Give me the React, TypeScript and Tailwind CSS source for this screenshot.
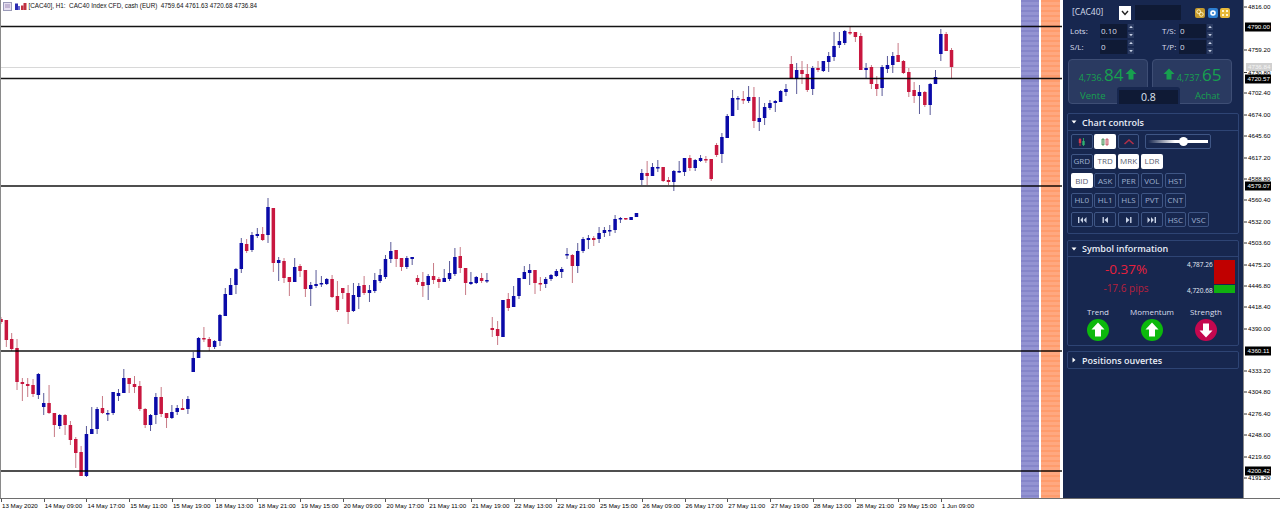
import React from "react";

type C = [number, number, number, number, number, number];
// [index, wickTop, bodyTop, bodyBottom, wickBottom, 0 red / 1 blue]
const candles: C[] = [
[0,317,319,322,324,0],[1,320,320,340,347,0],[2,333,339,349,351,0],[3,339,348,382,390,0],[4,378,382,384,401,0],[5,378,384,386,397,0],[6,379,385,394,397,0],[7,373,374,395,399,1],[8,393,403,407,415,1],[9,385,403,413,414,0],[10,413,413,425,437,0],[11,414,415,426,429,1],[12,414,415,425,435,0],[13,421,425,440,445,0],[14,437,439,453,468,0],[15,446,452,476,476,0],[16,426,434,476,477,1],[17,407,429,434,434,1],[18,407,409,429,434,1],[19,396,408,413,414,0],[20,410,413,414,421,1],[21,392,392,413,415,1],[22,389,393,396,401,1],[23,369,378,393,393,1],[24,378,378,384,393,0],[25,376,384,387,393,0],[26,381,386,409,411,0],[27,408,409,425,428,0],[28,414,415,425,431,1],[29,393,397,415,424,1],[30,387,397,414,417,0],[31,413,413,418,428,0],[32,405,412,418,419,1],[33,405,408,412,415,1],[34,399,408,410,410,0],[35,396,399,409,414,1],
[36,352,358,372,372,1],[37,337,338,358,358,1],[38,327,338,339,342,0],[39,337,339,347,351,0],[40,340,341,347,349,1],[41,314,315,341,346,1],[42,288,294,316,316,1],[43,278,285,295,295,1],[44,268,269,285,294,1],[45,238,243,269,273,1],[46,239,244,251,253,0],[47,232,235,250,252,1],[48,228,234,236,238,1],[49,227,234,240,241,0],[50,198,207,235,243,1],[51,208,208,263,272,0],[52,257,260,263,281,1],[53,258,261,278,283,0],[54,277,277,282,296,0],[55,258,267,282,282,1],[56,264,266,271,277,0],[57,270,270,289,297,0],[58,282,285,289,306,1],[59,270,284,286,288,1],[60,276,283,284,287,1],[61,278,279,284,285,1],[62,275,279,297,298,0],[63,281,296,310,312,0],[64,288,288,293,299,0],[65,285,293,312,324,0],[66,283,295,311,312,1],[67,283,286,297,309,1],[68,276,285,293,295,0],[69,285,290,293,302,1],[70,273,280,291,293,1],[71,269,275,281,283,1],[72,255,259,277,279,1],[73,242,251,259,263,1],[74,250,250,259,267,0],[75,258,258,267,271,0],[76,256,258,267,269,1],[77,257,257,259,265,1],
[78,275,278,282,285,0],[79,272,282,286,297,0],[80,274,276,285,300,1],[81,263,276,280,284,0],[82,277,279,282,288,0],[83,269,278,282,282,1],[84,261,273,279,281,1],[85,248,257,274,276,1],[86,247,256,268,273,0],[87,268,268,283,295,0],[88,272,282,284,285,1],[89,276,277,283,284,1],[90,273,278,281,283,0],[91,273,280,281,283,1],[92,317,328,330,337,0],[93,321,329,336,345,0],[94,300,300,337,337,1],[95,293,299,308,311,0],[96,286,296,307,307,1],[97,278,278,296,299,1],[98,266,272,279,279,1],[99,264,270,273,285,1],[100,270,270,283,294,0],[101,277,283,284,291,0],[102,277,279,284,288,1],[103,274,275,279,281,1],[104,269,271,276,277,1],[105,267,269,272,278,1],[106,248,254,255,259,1],[107,254,255,266,283,0],[108,243,251,266,273,1],[109,237,239,251,253,1],[110,235,238,240,249,1],[111,236,238,240,246,0],[112,227,233,239,243,1],[113,227,230,233,237,1],[114,225,230,231,236,1],[115,215,219,230,233,1],[116,217,218,219,223,1],[117,218,218,219,220,0],[118,217,217,220,220,1],[119,213,213,217,217,1],
[120,169,173,180,185,1],[121,161,173,176,185,0],[122,163,167,176,176,1],[123,160,167,168,172,1],[124,167,167,181,182,0],[125,177,180,182,185,0],[126,170,171,182,191,1],[127,161,171,172,173,1],[128,158,158,172,176,1],[129,155,158,168,171,0],[130,159,160,168,171,1],[131,155,158,161,162,1],[132,156,159,160,163,0],[133,159,159,179,181,0],[134,143,145,155,157,0],[135,133,137,154,163,1],[136,114,116,138,138,1],[137,90,98,116,116,1],[138,96,98,99,110,1],[139,91,99,100,104,0],[140,86,97,101,103,1],[141,87,97,121,128,0],[142,97,118,122,131,1],[143,103,107,118,125,1],[144,100,103,108,110,1],[145,100,101,103,112,1],[146,90,91,102,102,1],[147,84,89,92,96,1],[148,56,64,79,79,0],[149,63,70,79,94,1],[150,61,70,74,84,0],[151,64,74,90,92,0],[152,66,68,89,95,1],[153,61,68,70,72,0],[154,61,61,71,72,1],[155,52,56,62,72,1],[156,32,46,57,61,1],[157,32,41,45,48,1],[158,30,31,43,45,1],[159,27,32,33,35,0],[160,32,32,37,42,0],[161,33,36,70,70,0],[162,63,68,70,78,1],[163,65,67,84,89,0],[164,76,84,89,96,0],[165,65,67,88,96,1],[166,56,65,69,73,1],[167,52,56,65,73,1],[168,43,55,62,62,0],[169,60,61,73,74,0],[170,68,72,92,97,0],[171,82,90,96,103,0],[172,85,92,96,114,1],[173,91,92,105,107,0],[174,83,84,105,115,1],[175,70,77,84,84,1],[176,29,34,54,61,1],[177,32,34,51,51,0],[178,48,50,67,79,0],
];

const hLines = [26.5, 78.5, 186, 351, 471];

const axisTicks: [string, number][] = [
["4816.00",7],["4759.20",50],["4730.80",72.5],["4702.40",93],["4674.00",115],["4645.60",136],["4617.20",158],["4588.80",179],["4560.40",200],["4532.00",222],["4503.60",243],["4475.20",265],["4446.80",286],["4418.40",307],["4390.00",329],["4333.20",371],["4304.80",392],["4276.40",414],["4248.00",435],["4219.60",457],["4191.20",478],
];
const axisMarks: [string, number][] = [["4790.00",27],["4720.57",79],["4579.07",186],["4360.11",351],["4200.42",471]];

const dates = ["13 May 2020","14 May 09:00","14 May 17:00","15 May 11:00","15 May 19:00","18 May 13:00","18 May 21:00","19 May 15:00","20 May 09:00","20 May 17:00","21 May 11:00","21 May 19:00","22 May 13:00","22 May 21:00","25 May 15:00","26 May 09:00","26 May 17:00","27 May 11:00","27 May 19:00","28 May 13:00","28 May 21:00","29 May 15:00","1 Jun 09:00"];

const btn = "flex h-[15px] w-[21.5px] items-center justify-center rounded-[2px] border border-[#3f5685] text-[8px] leading-none text-[#9fb0cf]";
const btnOn = "flex h-[15px] w-[21.5px] items-center justify-center rounded-[2px] bg-white text-[8px] leading-none text-[#5a6072]";

function B({ t, on }: { t: string; on?: boolean }) {
  return <div className={on ? btnOn : btn}>{t}</div>;
}

function Caret({ open }: { open: boolean }) {
  return (
    <svg width="6" height="6" viewBox="0 0 6 6" className="shrink-0">
      {open ? <path d="M0.5 1.5H5.5L3 4.5Z" fill="#fff" /> : <path d="M1.5 0.5V5.5L4.5 3Z" fill="#fff" />}
    </svg>
  );
}

function Spin() {
  return (
    <div className="ml-px flex h-[14px] w-[6px] flex-col justify-between">
      <svg width="6" height="6" viewBox="0 0 6 6"><rect width="6" height="6" fill="#2a3a61" /><path d="M1.2 4H4.8L3 1.8Z" fill="#c8d2e6" /></svg>
      <svg width="6" height="6" viewBox="0 0 6 6"><rect width="6" height="6" fill="#2a3a61" /><path d="M1.2 2H4.8L3 4.2Z" fill="#c8d2e6" /></svg>
    </div>
  );
}

function Field({ label, value, labelW }: { label: string; value: string; labelW: string }) {
  return (
    <div className="flex items-center">
      <span className={`${labelW} text-[8px] leading-none text-[#d7deec]`}>{label}</span>
      <div className="flex h-[14px] w-[27px] items-center bg-[#0f1a35] pl-[1px] text-[8px] leading-none text-[#d7deec]">{value}</div>
      <Spin />
    </div>
  );
}

function GreenUp() {
  return (
    <svg width="12" height="12" viewBox="0 0 12 12" className="shrink-0">
      <path d="M6 0.5L11.5 6H8.5V11.5H3.5V6H0.5Z" fill="#17a04f" />
    </svg>
  );
}

function Circle({ up }: { up: boolean }) {
  return (
    <svg width="22" height="22" viewBox="0 0 22 22">
      <circle cx="11" cy="11" r="11" fill={up ? "#0cb90c" : "#c4084f"} />
      {up
        ? <path d="M11 3.5L17.5 10.5H14V17.5H8V10.5H4.5Z" fill="#fff" />
        : <path d="M11 18.5L4.5 11.5H8V4.5H14V11.5H17.5Z" fill="#fff" />}
    </svg>
  );
}

function Transport({ kind }: { kind: number }) {
  const paths = [
    "M1 1h1.4v6H1zM6 1v6L3.2 4zM9.5 1v6L6.7 4z",
    "M2.5 1h1.4v6H2.5zM8 1v6L4.5 4z",
    "M6.1 1h1.4v6H6.1zM2 1v6L5.5 4z",
    "M7.6 1h1.4v6H7.6zM0.5 1v6L3.3 4zM4 1v6L6.8 4z",
  ];
  return (
    <div className={btn}>
      <svg width="10" height="8" viewBox="0 0 10 8"><path d={paths[kind]} fill="#c8d2e6" /></svg>
    </div>
  );
}

function PriceBox({ side }: { side: "sell" | "buy" }) {
  const sell = side === "sell";
  return (
    <div className="h-[45px] w-[80px] rounded-[4px] border border-[#3e4e75] bg-[#2a3a61]">
      <div className="flex h-[28px] items-center justify-center gap-[2px] text-[#17a04f]">
        {!sell && <GreenUp />}
        <span className="flex items-baseline">
          <span className="text-[9px] leading-none">{sell ? "4,736." : "4,737."}</span>
          <span className="text-[17px] leading-none">{sell ? "84" : "65"}</span>
        </span>
        {sell && <GreenUp />}
      </div>
      <div className={`pt-[3px] text-[9.5px] leading-none text-[#17a04f] ${sell ? "pl-[11px]" : "pr-[11px] text-right"}`}>
        {sell ? "Vente" : "Achat"}
      </div>
    </div>
  );
}

export default function App() {
  return (
    <div className="flex h-[512px] w-[1280px] flex-col overflow-hidden bg-white font-['Open_Sans',sans-serif]">
      <div className="flex h-[499px] border-b border-[#6e6e6e]">
        <div className="relative flex w-[1063px] border-l border-[#8a8a8a]">
          <svg width="1020" height="498" viewBox="1 0 1020 498" className="shrink-0">
            <line x1="0" x2="1020" y1="67.5" y2="67.5" stroke="#d8d8d8" />
            {candles.map(([i, wt, bt, bb, wb, c]) => {
              const x = 1 + 5.34 * i;
              const fill = c ? "#0a0aa8" : "#c8173f";
              return (
                <g key={i}>
                  <line x1={x} x2={x} y1={wt} y2={wb} stroke={c ? "#5a5a98" : "#c87a86"} strokeWidth="1" />
                  <rect x={x - 1.75} y={bt} width="3.5" height={Math.max(bb - bt, 1.5)} fill={fill} />
                </g>
              );
            })}
          </svg>
          <div className="h-full w-[18px] bg-[repeating-linear-gradient(180deg,#8585c9_0px,#8585c9_2px,#9393d2_2px,#9393d2_5px)]" />
          <div className="h-full w-[2px] bg-[#ffffff]" />
          <div className="h-full w-[19px] bg-[repeating-linear-gradient(180deg,#ff9c6c_0px,#ff9c6c_2px,#ffa880_2px,#ffa880_5px)]" />

          <svg width="1062" height="498" viewBox="1 0 1062 498" className="pointer-events-none absolute left-0 top-0">
            {hLines.map((y) => (
              <line key={y} x1="0" x2="1062" y1={y} y2={y} stroke="#000" strokeOpacity="0.92" strokeWidth="1.5" />
            ))}
          </svg>

          <div className="absolute left-[2px] top-[2px] flex items-center gap-[1.5px]">
            <svg width="24" height="9" viewBox="0 0 24 9">
              <rect x="0.5" y="0.5" width="8" height="8" fill="#e6dff0" stroke="#9a9ab8" />
              <path d="M2 3h5M2 5h5" stroke="#a08cb8" />
              <rect x="12" y="1.5" width="3" height="6.5" fill="#2b2bb0" />
              <rect x="15" y="4" width="2" height="4" fill="#6a6ad0" />
              <rect x="18" y="3.5" width="2.5" height="4.5" fill="#c03040" />
              <rect x="20.5" y="1" width="3" height="7" fill="#c03040" />
            </svg>
            <span className="whitespace-pre font-['Liberation_Sans',sans-serif] text-[6.3px] leading-none text-[#111]">
              {"[CAC40], H1:  CAC40 Index CFD, cash (EUR)  4759.64 4761.63 4720.68 4736.84"}
            </span>
          </div>
        </div>

        <div className="flex w-[180px] flex-col bg-[#17274f] px-[4px] pt-[5px]">
          <div className="flex h-[15px] items-center pl-[5px]">
            <span className="w-[47px] text-[8.5px] leading-none text-[#d7deec]">[CAC40]</span>
            <div className="flex h-[14px] w-[12px] items-center justify-center bg-white">
              <svg width="8" height="6" viewBox="0 0 8 6"><path d="M1 1L4 4.5L7 1" fill="none" stroke="#222" strokeWidth="1.4" /></svg>
            </div>
            <div className="ml-[4px] h-[15px] w-[46px] bg-[#0f1a35]" />
            <div className="ml-[14px] flex gap-[2.5px]">
              <svg width="10" height="10" viewBox="0 0 10 10"><rect width="10" height="10" rx="2" fill="#c49a2e" /><circle cx="3.7" cy="3.7" r="1.9" fill="none" stroke="#fff3c4" /><circle cx="6.3" cy="6.3" r="1.9" fill="none" stroke="#fff3c4" /></svg>
              <svg width="10" height="10" viewBox="0 0 10 10"><rect width="10" height="10" rx="2" fill="#2e7fd0" /><circle cx="5" cy="5" r="2.8" fill="#fff" /><circle cx="5" cy="5" r="1.1" fill="#2e7fd0" /></svg>
              <svg width="10" height="10" viewBox="0 0 10 10"><rect width="10" height="10" rx="2" fill="#e8b93a" /><path d="M2 2h2v2H2zM6 2h2v2H6zM2 6h2v2H2zM6 6h2v2H6z" fill="#fff6d0" /></svg>
            </div>
          </div>

          <div className="mt-[4px] flex flex-col gap-[2px] pl-[3px]">
            <div className="flex">
              <div className="w-[92px]"><Field label="Lots:" value="0.10" labelW="w-[30px]" /></div>
              <Field label="T/S:" value="0" labelW="w-[17px]" />
            </div>
            <div className="flex">
              <div className="w-[92px]"><Field label="S/L:" value="0" labelW="w-[30px]" /></div>
              <Field label="T/P:" value="0" labelW="w-[17px]" />
            </div>
          </div>

          <div className="relative mt-[5px] flex h-[45px] gap-[4px] pl-[1px]">
            <PriceBox side="sell" />
            <PriceBox side="buy" />
            <div className="absolute left-[50px] top-[28px] flex h-[17px] w-[63px] items-end rounded-t-[3px] bg-[#17274f] px-[2px]">
              <div className="flex h-[14px] w-full items-center justify-center bg-[#0f1a35] text-[10.5px] leading-none text-[#dfe5f0]">0.8</div>
            </div>
          </div>

          <div className="mt-[9px] h-[121px] w-[172px] rounded-[2px] border border-[#2e4474]">
            <div className="flex h-[17px] items-center gap-[5px] border-b border-[#2e4474] pl-[3px]">
              <Caret open />
              <span className="text-[9px] font-semibold leading-none text-[#e8edf6]">Chart controls</span>
            </div>
            <div className="flex flex-col gap-[4.5px] pl-[3px] pt-[3px]">
              <div className="flex gap-[1.9px]">
                <div className={btn}>
                  <svg width="10" height="10" viewBox="0 0 10 10"><path d="M3 1v8" stroke="#c03040" /><path d="M6.5 1v8" stroke="#30a060" /><rect x="1.8" y="2" width="2.4" height="4" fill="#d03a50" /><rect x="5.3" y="4" width="2.4" height="4" fill="#30b070" /></svg>
                </div>
                <div className={btnOn}>
                  <svg width="10" height="10" viewBox="0 0 10 10"><path d="M3 1v8" stroke="#60a070" /><path d="M7 1v8" stroke="#d07080" /><rect x="2" y="2.5" width="2" height="5" fill="none" stroke="#60a070" /><rect x="6" y="2.5" width="2" height="5" fill="none" stroke="#d07080" /></svg>
                </div>
                <div className={btn}>
                  <svg width="12" height="8" viewBox="0 0 12 8"><path d="M1.5 6L6 2L10.5 6" fill="none" stroke="#b03048" strokeWidth="1.6" /></svg>
                </div>
                <div className="ml-[4px] flex h-[15px] w-[66px] items-center rounded-[2px] border border-[#3f5685] px-[2px]">
                  <div className="relative h-[3px] w-full bg-[linear-gradient(90deg,#17274f,#ffffff_45%)]">
                    <div className="absolute left-[31px] top-[-3px] h-[9px] w-[9px] rounded-full bg-white" />
                  </div>
                </div>
              </div>
              <div className="flex gap-[1.9px]"><B t="GRD" /><B t="TRD" on /><B t="MRK" on /><B t="LDR" on /></div>
              <div className="flex gap-[1.9px]"><B t="BID" on /><B t="ASK" /><B t="PER" /><B t="VOL" /><B t="HST" /></div>
              <div className="flex gap-[1.9px]"><B t="HL0" /><B t="HL1" /><B t="HLS" /><B t="PVT" /><B t="CNT" /></div>
              <div className="flex gap-[1.9px]"><Transport kind={0} /><Transport kind={1} /><Transport kind={2} /><Transport kind={3} /><B t="HSC" /><B t="VSC" /></div>
            </div>
          </div>

          <div className="mt-[6px] h-[106px] w-[172px] rounded-[2px] border border-[#2e4474]">
            <div className="flex h-[16px] items-center gap-[5px] border-b border-[#2e4474] pl-[3px]">
              <Caret open />
              <span className="text-[9px] font-semibold leading-none text-[#e8edf6]">Symbol information</span>
            </div>
            <div className="flex h-[41px] pt-[3px]">
              <div className="flex w-[119px] flex-col items-center pr-[3px] pt-[3px]">
                <span className="text-[13.5px] leading-none text-[#e8203c]">-0.37%</span>
                <span className="mt-[6px] text-[10px] leading-none text-[#b81f3c]">-17.6 pips</span>
              </div>
              <div className="flex flex-col justify-between pb-[3px] pt-[1px]">
                <span className="text-[6.5px] leading-[8px] text-[#e8edf6]">4,787.26</span>
                <span className="text-[6.5px] leading-[8px] text-[#e8edf6]">4,720.68</span>
              </div>
              <div className="ml-[1px] flex w-[21px] flex-col">
                <div className="h-[24px] bg-[#c00000]" />
                <div className="mt-px h-[8px] bg-[#10b010]" />
              </div>
            </div>
            <div className="mt-[8px] flex pl-[3px]">
              {[["Trend", true], ["Momentum", true], ["Strength", false]].map(([t, up]) => (
                <div key={t as string} className="flex w-[54px] flex-col items-center gap-[1px]">
                  <span className="text-[8px] leading-[12px] text-[#d7deec]">{t as string}</span>
                  <Circle up={up as boolean} />
                </div>
              ))}
            </div>
          </div>

          <div className="mt-[5px] flex h-[18px] w-[172px] items-center gap-[5px] rounded-[2px] border border-[#2e4474] pl-[3px]">
            <Caret open={false} />
            <span className="text-[9px] font-semibold leading-none text-[#e8edf6]">Positions ouvertes</span>
          </div>
        </div>

        <div className="w-[37px] border-l border-[#8a8a8a]">
          <svg width="36" height="498" viewBox="0 0 36 498" className="font-['Liberation_Sans',sans-serif] text-[6.2px]">
            {axisTicks.map(([t, y]) => (
              <g key={t}>
                <line x1="0" x2="3" y1={y} y2={y} stroke="#333" />
                <text x="4" y={y + 2.2} fill="#000">{t}</text>
              </g>
            ))}
            <rect x="2" y="63" width="26" height="8" fill="#d0d0d0" />
            <text x="4" y="69.2" fill="#f4f4f4">4736.84</text>
            {axisMarks.map(([t, y]) => (
              <g key={t}>
                <rect x="1" y={y - 4.5} width="26" height="9" fill="#000" />
                <text x="3.5" y={y + 2.2} fill="#fff">{t}</text>
              </g>
            ))}
          </svg>
        </div>
      </div>

      <div className="flex h-[12px] pl-px font-['Liberation_Sans',sans-serif]">
        {dates.map((d) => (
          <div key={d} className="relative h-[3px] w-[42.72px] shrink-0 whitespace-nowrap border-l border-[#555]">
            <span className="absolute left-[0px] top-[3px] text-[6.2px] leading-[8px] text-[#000]">{d}</span>
          </div>
        ))}
      </div>
    </div>
  );
}
